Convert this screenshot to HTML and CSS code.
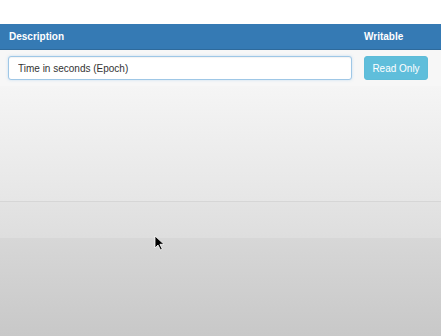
FILE: index.html
```html
<!DOCTYPE html>
<html>
<head>
<meta charset="utf-8">
<link rel="stylesheet" href="styles.css">
</head>
<body>
<div class="page">
  <div class="topgap"></div>
  <div class="table">
    <div class="thead">
      <div class="th">Description</div>
      <div class="th th-writ">Writable</div>
    </div>
    <div class="trow">
      <div class="cell cell-desc"><input class="field" type="text" value="Time in seconds (Epoch)"></div>
      <div class="cell cell-writ"><button class="btn-info" disabled>Read Only</button></div>
    </div>
  </div>
  <div class="backdrop">
    <div class="pane pane-upper"></div>
    <div class="pane pane-mid"></div>
    <div class="pane pane-lower"></div>
  </div>
  <svg class="cursor" width="12" height="17" viewBox="0 0 12 17">
    <path d="M1 1 L1 13 L4 10 L6.5 15 L8.3 14.2 L5.9 9.3 L10 9.3 Z" fill="#000" stroke="#fff" stroke-width="0.8" stroke-linejoin="round"/>
  </svg>
</div>
</body>
</html>
```
FILE: styles.css
```css
html, body {
  margin: 0;
  padding: 0;
  height: 100%;
}
body {
  font-family: "Liberation Sans", Arial, sans-serif;
  font-size: 10px;
  color: #333;
  overflow: hidden;
}
.page {
  position: relative;
  display: flex;
  flex-direction: column;
  height: 336px;
}
.topgap {
  height: 24px;
  background: #fff;
  flex: none;
}
.table {
  flex: none;
}
.thead {
  display: grid;
  grid-template-columns: 356px 1fr;
  height: 25px;
  align-items: center;
  background: #357ab4;
  border-bottom: 1px solid #2e6a9c;
  color: #fff;
  font-weight: bold;
}
.th {
  padding-left: 9px;
}
.th-writ {
  padding-left: 8px;
}
.trow {
  display: grid;
  grid-template-columns: 356px 1fr;
  height: 36px;
  align-items: center;
  background: #f7f7f7;
}
.cell-desc {
  padding-left: 8px;
  padding-right: 4px;
}
.cell-writ {
  padding-left: 8px;
}
.field {
  box-sizing: border-box;
  display: block;
  width: 344px;
  height: 24px;
  margin: 0;
  padding: 0 9px;
  border: 1px solid #9fc7e6;
  border-radius: 3px;
  background: #fff;
  box-shadow: inset 0 1px 1px rgba(0,0,0,0.05), 0 0 3px rgba(102,175,233,0.35);
  font-family: "Liberation Sans", Arial, sans-serif;
  font-size: 10px;
  color: #333;
  outline: none;
}
.btn-info {
  box-sizing: border-box;
  display: block;
  width: 64px;
  height: 24px;
  margin: 0;
  padding: 0;
  border: 1px solid #5dbcd8;
  border-radius: 3px;
  background: #5fbedb;
  color: #fff;
  font-family: "Liberation Sans", Arial, sans-serif;
  font-size: 10px;
}
.backdrop {
  flex: 1;
  display: flex;
  flex-direction: column;
}
.pane-upper {
  height: 115px;
  background: linear-gradient(#f5f5f5, #e6e6e6);
  border-bottom: 1px solid #d6d6d6;
}
.pane-mid {
  height: 36px;
  background: linear-gradient(#e3e3e3, #dedede);
}
.pane-lower {
  flex: 1;
  background: linear-gradient(#d7d7d7, #c8c8c8);
}
.cursor {
  position: absolute;
  left: 154px;
  top: 235px;
}
```
